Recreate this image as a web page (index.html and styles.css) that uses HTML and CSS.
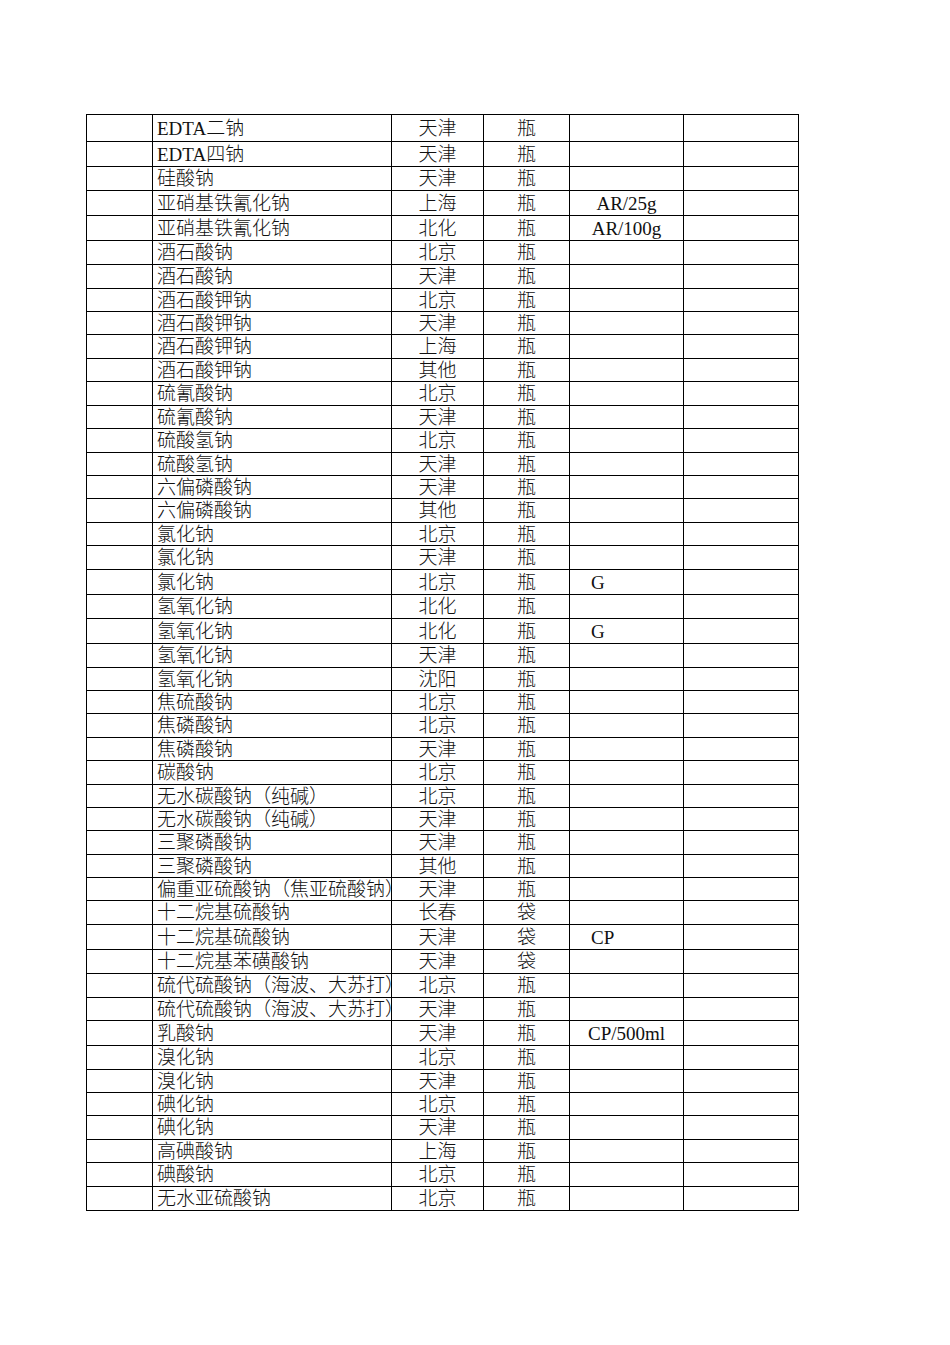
FILE: index.html
```html
<!DOCTYPE html>
<html lang="zh-CN">
<head>
<meta charset="utf-8">
<title>试剂清单</title>
<link rel="stylesheet" href="styles.css">
</head>
<body>
<div class="page">
<table class="sheet">
<colgroup>
<col class="c-idx"><col class="c-name"><col class="c-origin"><col class="c-unit"><col class="c-spec"><col class="c-note">
</colgroup>
<tbody>
<tr class="h27"><td></td><td class="name">EDTA二钠</td><td class="mid">天津</td><td class="mid">瓶</td><td></td><td></td></tr>
<tr class="h25"><td></td><td class="name">EDTA四钠</td><td class="mid">天津</td><td class="mid">瓶</td><td></td><td></td></tr>
<tr class="h24"><td></td><td class="name">硅酸钠</td><td class="mid">天津</td><td class="mid">瓶</td><td></td><td></td></tr>
<tr class="h25"><td></td><td class="name">亚硝基铁氰化钠</td><td class="mid">上海</td><td class="mid">瓶</td><td class="mid">AR/25g</td><td></td></tr>
<tr class="h25"><td></td><td class="name">亚硝基铁氰化钠</td><td class="mid">北化</td><td class="mid">瓶</td><td class="mid">AR/100g</td><td></td></tr>
<tr class="h24"><td></td><td class="name">酒石酸钠</td><td class="mid">北京</td><td class="mid">瓶</td><td></td><td></td></tr>
<tr class="h24"><td></td><td class="name">酒石酸钠</td><td class="mid">天津</td><td class="mid">瓶</td><td></td><td></td></tr>
<tr class="h23"><td></td><td class="name">酒石酸钾钠</td><td class="mid">北京</td><td class="mid">瓶</td><td></td><td></td></tr>
<tr class="h23"><td></td><td class="name">酒石酸钾钠</td><td class="mid">天津</td><td class="mid">瓶</td><td></td><td></td></tr>
<tr class="h24"><td></td><td class="name">酒石酸钾钠</td><td class="mid">上海</td><td class="mid">瓶</td><td></td><td></td></tr>
<tr class="h23"><td></td><td class="name">酒石酸钾钠</td><td class="mid">其他</td><td class="mid">瓶</td><td></td><td></td></tr>
<tr class="h24"><td></td><td class="name">硫氰酸钠</td><td class="mid">北京</td><td class="mid">瓶</td><td></td><td></td></tr>
<tr class="h23"><td></td><td class="name">硫氰酸钠</td><td class="mid">天津</td><td class="mid">瓶</td><td></td><td></td></tr>
<tr class="h24"><td></td><td class="name">硫酸氢钠</td><td class="mid">北京</td><td class="mid">瓶</td><td></td><td></td></tr>
<tr class="h23"><td></td><td class="name">硫酸氢钠</td><td class="mid">天津</td><td class="mid">瓶</td><td></td><td></td></tr>
<tr class="h23"><td></td><td class="name">六偏磷酸钠</td><td class="mid">天津</td><td class="mid">瓶</td><td></td><td></td></tr>
<tr class="h24"><td></td><td class="name">六偏磷酸钠</td><td class="mid">其他</td><td class="mid">瓶</td><td></td><td></td></tr>
<tr class="h23"><td></td><td class="name">氯化钠</td><td class="mid">北京</td><td class="mid">瓶</td><td></td><td></td></tr>
<tr class="h24"><td></td><td class="name">氯化钠</td><td class="mid">天津</td><td class="mid">瓶</td><td></td><td></td></tr>
<tr class="h25"><td></td><td class="name">氯化钠</td><td class="mid">北京</td><td class="mid">瓶</td><td class="lead">G</td><td></td></tr>
<tr class="h24"><td></td><td class="name">氢氧化钠</td><td class="mid">北化</td><td class="mid">瓶</td><td></td><td></td></tr>
<tr class="h25"><td></td><td class="name">氢氧化钠</td><td class="mid">北化</td><td class="mid">瓶</td><td class="lead">G</td><td></td></tr>
<tr class="h24"><td></td><td class="name">氢氧化钠</td><td class="mid">天津</td><td class="mid">瓶</td><td></td><td></td></tr>
<tr class="h23"><td></td><td class="name">氢氧化钠</td><td class="mid">沈阳</td><td class="mid">瓶</td><td></td><td></td></tr>
<tr class="h23"><td></td><td class="name">焦硫酸钠</td><td class="mid">北京</td><td class="mid">瓶</td><td></td><td></td></tr>
<tr class="h24"><td></td><td class="name">焦磷酸钠</td><td class="mid">北京</td><td class="mid">瓶</td><td></td><td></td></tr>
<tr class="h23"><td></td><td class="name">焦磷酸钠</td><td class="mid">天津</td><td class="mid">瓶</td><td></td><td></td></tr>
<tr class="h24"><td></td><td class="name">碳酸钠</td><td class="mid">北京</td><td class="mid">瓶</td><td></td><td></td></tr>
<tr class="h23"><td></td><td class="name">无水碳酸钠（纯碱）</td><td class="mid">北京</td><td class="mid">瓶</td><td></td><td></td></tr>
<tr class="h23"><td></td><td class="name">无水碳酸钠（纯碱）</td><td class="mid">天津</td><td class="mid">瓶</td><td></td><td></td></tr>
<tr class="h24"><td></td><td class="name">三聚磷酸钠</td><td class="mid">天津</td><td class="mid">瓶</td><td></td><td></td></tr>
<tr class="h23"><td></td><td class="name">三聚磷酸钠</td><td class="mid">其他</td><td class="mid">瓶</td><td></td><td></td></tr>
<tr class="h23"><td></td><td class="name">偏重亚硫酸钠（焦亚硫酸钠）</td><td class="mid">天津</td><td class="mid">瓶</td><td></td><td></td></tr>
<tr class="h24"><td></td><td class="name">十二烷基硫酸钠</td><td class="mid">长春</td><td class="mid">袋</td><td></td><td></td></tr>
<tr class="h25"><td></td><td class="name">十二烷基硫酸钠</td><td class="mid">天津</td><td class="mid">袋</td><td class="lead">CP</td><td></td></tr>
<tr class="h24"><td></td><td class="name">十二烷基苯磺酸钠</td><td class="mid">天津</td><td class="mid">袋</td><td></td><td></td></tr>
<tr class="h24"><td></td><td class="name">硫代硫酸钠（海波、大苏打）</td><td class="mid">北京</td><td class="mid">瓶</td><td></td><td></td></tr>
<tr class="h23"><td></td><td class="name">硫代硫酸钠（海波、大苏打）</td><td class="mid">天津</td><td class="mid">瓶</td><td></td><td></td></tr>
<tr class="h25"><td></td><td class="name">乳酸钠</td><td class="mid">天津</td><td class="mid">瓶</td><td class="mid">CP/500ml</td><td></td></tr>
<tr class="h24"><td></td><td class="name">溴化钠</td><td class="mid">北京</td><td class="mid">瓶</td><td></td><td></td></tr>
<tr class="h23"><td></td><td class="name">溴化钠</td><td class="mid">天津</td><td class="mid">瓶</td><td></td><td></td></tr>
<tr class="h23"><td></td><td class="name">碘化钠</td><td class="mid">北京</td><td class="mid">瓶</td><td></td><td></td></tr>
<tr class="h24"><td></td><td class="name">碘化钠</td><td class="mid">天津</td><td class="mid">瓶</td><td></td><td></td></tr>
<tr class="h23"><td></td><td class="name">高碘酸钠</td><td class="mid">上海</td><td class="mid">瓶</td><td></td><td></td></tr>
<tr class="h24"><td></td><td class="name">碘酸钠</td><td class="mid">北京</td><td class="mid">瓶</td><td></td><td></td></tr>
<tr class="h24"><td></td><td class="name">无水亚硫酸钠</td><td class="mid">北京</td><td class="mid">瓶</td><td></td><td></td></tr>
</tbody>
</table>
</div>
</body>
</html>
```

FILE: styles.css
```css
html, body {
  margin: 0;
  padding: 0;
  background: #fff;
}
.page {
  padding: 114px 0 0 86px;
}
.sheet {
  border-collapse: collapse;
  table-layout: fixed;
  width: 712px;
  font-family: "Liberation Serif", "Noto Sans CJK SC", serif;
  font-size: 19px;
  line-height: 1;
  color: #111;
}
.c-idx { width: 66px; }
.c-name { width: 239px; }
.c-origin { width: 92px; }
.c-unit { width: 86px; }
.c-spec { width: 114px; }
.c-note { width: 115px; }
.sheet td {
  border: 1px solid #000;
  padding: 0;
  vertical-align: middle;
  white-space: nowrap;
  overflow: hidden;
}
.sheet td:nth-child(3),
.sheet td:nth-child(4) {
  border-left-color: #555;
}
.name {
  padding-left: 4px !important;
  font-weight: 300;
}
.mid {
  text-align: center;
  font-weight: 300;
}
.lead {
  padding-left: 21px !important;
}
.h23 { height: 23px; }
.h24 { height: 24px; }
.h25 { height: 25px; }
.h27 { height: 27px; }
```
